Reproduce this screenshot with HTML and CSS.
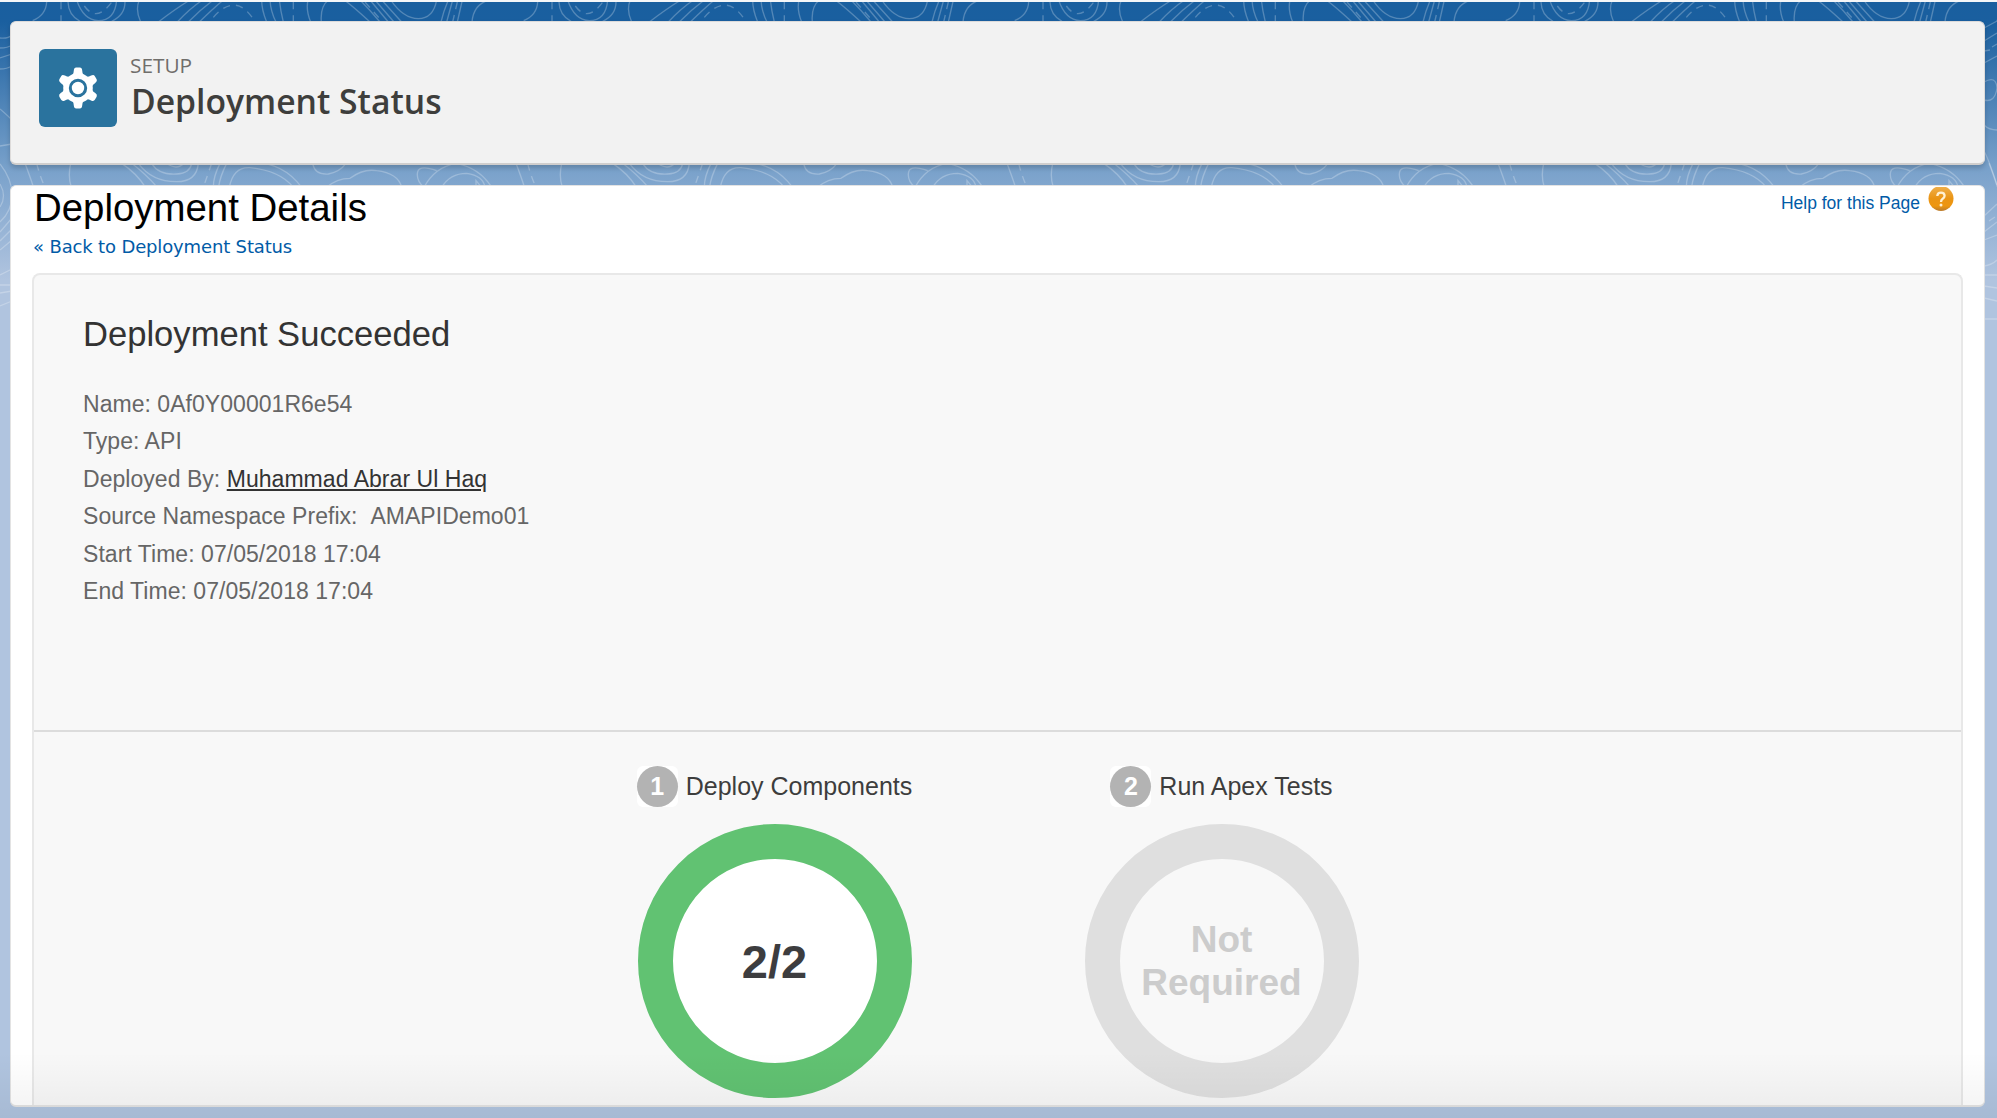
FILE: index.html
```html
<!DOCTYPE html>
<html lang="en">
<head>
<meta charset="utf-8">
<title>Deployment Status</title>
<link rel="stylesheet" href="styles.css">
</head>
<body>
<svg class="topography" width="1997" height="400" aria-hidden="true">
  <defs>
    <pattern id="contours" width="491" height="400" patternUnits="userSpaceOnUse">
      <g transform="scale(.33333)" fill="none" stroke="#fff" stroke-opacity=".25" stroke-width="4">
        <path d="M140 6Q138 45 98 62M204 6Q205 45 240 64M375 6Q375 45 335 64M418 0Q405 30 422 66M570 0Q530 24 475 66M608 0Q570 25 532 66M640 0Q600 30 565 66M670 0Q640 25 598 66M785 0Q785 30 800 66M810 0Q812 35 828 66M838 0Q842 35 850 66M924 0Q917 30 932 66M985 0Q960 20 964 66M1033 0Q1060 20 1110 66M1080 0Q1110 30 1140 66M1110 0L1165 66M1125 0L1182 66M1145 0L1205 66M1172 0Q1210 56 1255 56Q1300 56 1310 0M1345 0Q1330 35 1323 66M1358 0L1340 66M1387 0L1372 66M1465 0Q1420 15 1416 66M230 0Q250 60 295 62Q345 62 350 0"/>
        <path stroke-dasharray="22 18" d="M183 6V64M253 18Q290 70 337 4M640 52Q710 -28 765 66M880 6V64M1095 6L1148 66M1372 6L1358 66"/>
        <path d="M75 490Q90 530 100 560M212 490Q203 530 214 562M365 490Q410 520 435 560M395 490Q440 525 470 560M415 490Q455 545 530 545Q590 545 595 490M455 490Q475 525 530 522Q570 520 575 490M500 490Q530 512 552 490M660 490Q640 530 640 560M680 490Q660 530 656 560M688 562Q700 500 750 503Q840 512 880 562M730 490Q840 475 905 562M938 490Q944 525 985 522Q1020 515 1038 490M980 562Q1010 535 1050 535Q1090 505 1130 512Q1195 520 1205 562M1310 512Q1250 490 1252 525Q1252 545 1272 562M1272 562Q1305 500 1370 490Q1440 505 1475 562M1325 562Q1350 520 1400 520Q1450 527 1455 562M1428 562V542L1445 562"/>
        <path stroke-dasharray="22 18" d="M110 490Q120 530 135 562M635 490L610 562"/>
      </g>
    </pattern>
  </defs>
  <rect width="1997" height="21" fill="url(#contours)"/>
  <rect y="163" width="1997" height="24" fill="url(#contours)"/>
  <g fill="none" stroke="#fff" stroke-opacity=".25" stroke-width="1.3">
    <path d="M0 38Q8 39 12 35M0 48Q8 48 12 45M0 69Q7 69 12 66M0 109Q8 116 12 120M0 146L12 144M0 164Q12 179 12 195T0 222M0 184Q7 196 0 207M0 232L12 218M0 241L12 229M0 250L12 240M0 275L12 269M0 285H12M0 293L12 291M0 306L12 301M0 58L12 54" />
    <path d="M1984 28L1997 21M1984 41L1997 33M1984 51L1990 50M1992 47L1997 44M1984 63L1997 56M1984 82Q1996 75 1997 88Q1995 103 1984 100M1984 125Q1989 130 1997 130M1984 151Q1989 160 1997 185M1984 216L1997 204M1984 232L1997 222M1989 221L1995 217M1984 240L1997 235M1984 266Q1992 265 1997 260M1984 275H1997M1984 286L1997 288M1984 298L1997 301M1984 319H1997"/>
  </g>
</svg>

<header class="page-header">
  <svg class="setup-icon" viewBox="0 0 78 78" aria-hidden="true">
    <rect width="78" height="78" rx="6" fill="#2a739e"/>
    <g transform="translate(39 39)">
      <g fill="#fff">
        <circle r="14.8"/>
        <path id="tooth" d="M-5.500-13Q-4.300-14.500-4.200-17.500Q-4-20.500-1.800-20.500H1.800Q4-20.500 4.200-17.500Q4.300-14.500 5.500-13Z"/>
        <use href="#tooth" transform="rotate(60)"/>
        <use href="#tooth" transform="rotate(120)"/>
        <use href="#tooth" transform="rotate(180)"/>
        <use href="#tooth" transform="rotate(240)"/>
        <use href="#tooth" transform="rotate(300)"/>
      </g>
      <circle r="7.700" fill="#fff" stroke="#2a739e" stroke-width="3"/>
    </g>
  </svg>
  <div class="page-heading">
    <p class="eyebrow">SETUP</p>
    <h1 class="page-title">Deployment Status</h1>
  </div>
</header>

<main class="content">
  <div class="content-top">
    <div>
      <h2 class="content-title">Deployment Details</h2>
      <a class="back-link">« Back to Deployment Status</a>
    </div>
    <a class="help-link"><span>Help for this Page</span>
      <svg class="help-icon" width="26" height="25" viewBox="0 0 26 25">
        <defs><linearGradient id="orange" x2="0" y2="1"><stop stop-color="#efb04d"/><stop offset=".5" stop-color="#ea9414"/><stop offset=".8" stop-color="#ee960f"/><stop offset="1" stop-color="#b97a2d"/></linearGradient></defs>
        <circle cx="13" cy="11.500" r="12.500" fill="url(#orange)"/>
        <path d="M9.300 9Q9.500 5.600 13 5.600T16.600 8.800Q16.600 10.500 14.700 11.700Q13 12.800 13 15" fill="none" stroke="#fff0d2" stroke-width="2.300"/>
        <circle cx="13" cy="18" r="1.500" fill="#fff0d2"/>
      </svg>
    </a>
  </div>

  <div class="panel">
    <section class="summary">
      <h3 class="summary-title">Deployment Succeeded</h3>
      <p>Name: 0Af0Y00001R6e54</p>
      <p>Type: API</p>
      <p>Deployed By: <a class="user-link">Muhammad Abrar Ul Haq</a></p>
      <p>Source Namespace Prefix: &nbsp;AMAPIDemo01</p>
      <p>Start Time: 07/05/2018 17:04</p>
      <p>End Time: 07/05/2018 17:04</p>
    </section>
    <section class="steps">
      <div class="step">
        <h4 class="step-title"><span class="badge"><span class="badge-dot">1</span></span>Deploy Components</h4>
        <div class="ring ring-done">2/2</div>
      </div>
      <div class="step">
        <h4 class="step-title"><span class="badge"><span class="badge-dot">2</span></span>Run Apex Tests</h4>
        <div class="ring ring-idle">Not<br>Required</div>
      </div>
    </section>
  </div>
</main>
<div class="bottom-shade"></div>
</body>
</html>
```

FILE: styles.css
```css
* { box-sizing: border-box; }

html, body { height: 100%; }

body {
  position: relative;
  display: flex;
  flex-direction: column;
  gap: 20px;
  margin: 0;
  padding: 19px 12px 11px 10px;
  border-top: 2px solid #f4f6f8;
  overflow: hidden;
  font-family: "Liberation Sans", Arial, sans-serif;
  background: linear-gradient(#195f9f 0, #1a5f9f 22px, #77a0ca 166px, #b0c4df 280px);
}

h1, h2, h3, h4, p { margin: 0; font-weight: 400; }

.topography {
  position: absolute;
  top: -2px;
  left: 0;
  clip-path: inset(2px 0 0 0);
}

.page-header {
  position: relative;
  display: flex;
  gap: 13px;
  flex: none;
  height: 144px;
  padding: 27px 28px 0;
  background: #f2f2f2;
  border: 1px solid #dddbda;
  border-bottom: 2px solid #d0cecd;
  border-radius: 6px;
  box-shadow: 0 3px 5px rgba(0, 0, 0, .18);
}

.setup-icon { width: 78px; height: 78px; }

.eyebrow {
  margin-top: 2px;
  font: 20.800px/28px "Open Sans", sans-serif;
  color: #706e6b;
}

.page-title {
  margin-left: 1px;
  font: 650 33.700px/44px "Open Sans", sans-serif;
  color: #3e3e3c;
}

.content {
  position: relative;
  display: flex;
  flex: 1;
  flex-direction: column;
  min-height: 0;
  padding: 0 21px;
  overflow: hidden;
  background: #fff;
  border: 1px solid #e3e3e3;
  border-width: 1px 1px 2px;
  border-radius: 6px;
}

.content-top {
  display: flex;
  justify-content: space-between;
  flex: none;
  height: 87px;
}

.content-title {
  margin-left: 2px;
  font-size: 38.400px;
  line-height: 44px;
  color: #000;
}

.back-link {
  display: block;
  margin: 5px 0 0 1px;
  font: 18px/24px "DejaVu Sans", Verdana, sans-serif;
  letter-spacing: -.15px;
  color: #015ba7;
}

.help-link {
  display: flex;
  gap: 8px;
  margin-right: 9px;
  font-size: 17.500px;
  line-height: 34px;
  color: #015ba7;
}

.help-icon { margin-top: 1px; }

.panel {
  display: flex;
  flex: 1;
  flex-direction: column;
  min-height: 0;
  background: #f8f8f8;
  border: 2px solid #e8e8e8;
  border-width: 2px 2px 0;
  border-radius: 8px 8px 0 0;
}

.summary {
  flex: none;
  height: 457px;
  padding: 37px 49px 0;
  font-size: 23px;
  line-height: 37.400px;
  letter-spacing: .04px;
  color: #666;
  border-bottom: 2px solid #dcdcdc;
}

.summary-title {
  margin-bottom: 30px;
  font-size: 34.600px;
  line-height: 44px;
  letter-spacing: 0;
  color: #333;
}

.user-link {
  color: #333;
  text-decoration: underline;
}

.steps {
  display: flex;
  justify-content: center;
  gap: 173px;
  padding: 34px 0 0 1px;
}

.step {
  display: flex;
  flex-direction: column;
  align-items: center;
  gap: 17px;
  width: 274px;
}

.step-title {
  display: flex;
  align-items: center;
  gap: 8px;
  white-space: nowrap;
  font-size: 25px;
  line-height: 41px;
  color: #3d3d3d;
}

.badge {
  width: 41px;
  height: 41px;
  background: #fff;
  border-radius: 6px;
}

.badge-dot {
  display: block;
  text-align: center;
  font-weight: 700;
  color: #fff;
  background: #b3b3b3;
  border-radius: 50%;
}

.ring {
  display: flex;
  align-items: center;
  justify-content: center;
  width: 274px;
  height: 274px;
  text-align: center;
  font-weight: 700;
  border: 35.500px solid;
  border-radius: 50%;
}

.ring-done {
  font-size: 47px;
  color: #3d3d3f;
  background: #fff;
  border-color: #61c272;
}

.ring-idle {
  padding-top: 2px;
  font-size: 37px;
  line-height: 42.600px;
  color: #ccc;
  border-color: #dfdfdf;
}

.bottom-shade {
  position: absolute;
  right: 0;
  bottom: 0;
  left: 0;
  height: 66px;
  background: linear-gradient(rgba(0, 0, 0, 0), rgba(0, 0, 0, .05));
}
```
